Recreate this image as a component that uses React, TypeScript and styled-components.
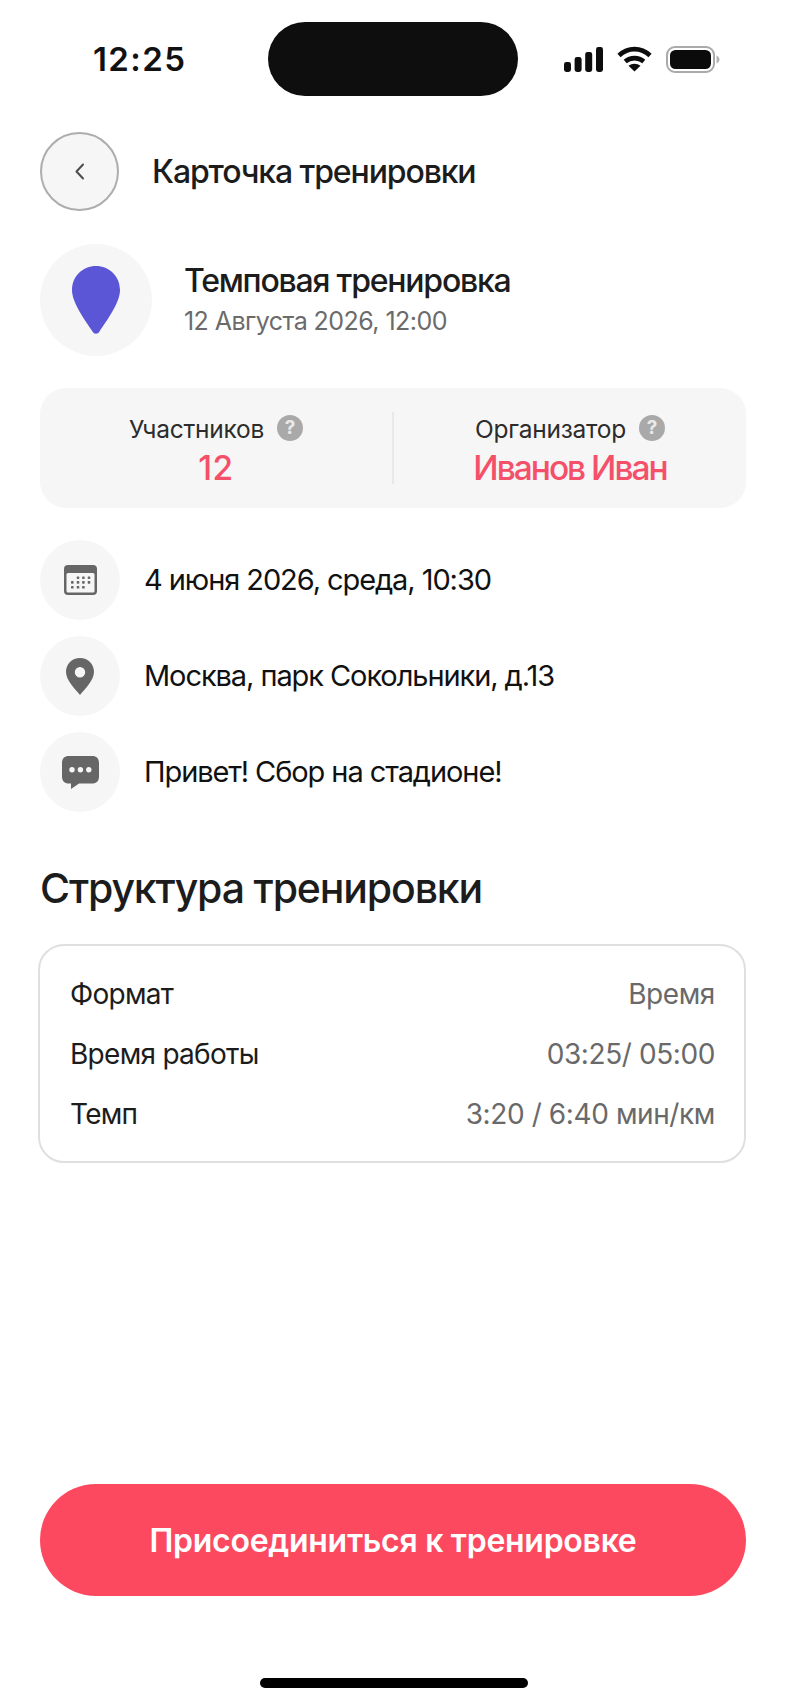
import React from "react";
import styled, { createGlobalStyle } from "styled-components";

const Global = createGlobalStyle`
  html, body { margin: 0; padding: 0; background: #fff; }
  * { box-sizing: border-box; }
  body { font-family: Inter, "Noto Sans", "Liberation Sans", sans-serif; }
`;

const Page = styled.div`
  width: 786px;
  height: 1704px;
  background: #fff;
  display: flex;
  flex-direction: column;
  overflow: hidden;
`;

const StatusBar = styled.div`
  display: grid;
  grid-template-columns: 268px 250px 1fr;
  height: 96px;
  margin-top: 22px;
`;

const Time = styled.div`
  padding-left: 93px;
  font-size: 33px;
  font-weight: 600;
  line-height: 74px;
  letter-spacing: 1.4px;
  color: #111;
`;

const Island = styled.div`
  background: #0e0e0e;
  border-radius: 37px;
  height: 74px;
`;

const StatusIcons = styled.div`
  display: flex;
  align-items: center;
  gap: 14px;
  height: 74px;
  padding-left: 46px;
`;

const Content = styled.div`
  flex: 1;
  display: flex;
  flex-direction: column;
  padding: 14px 40px 0 40px;
`;

const Header = styled.header`
  display: flex;
  align-items: center;
  gap: 33px;
`;

const BackButton = styled.button`
  width: 79px;
  height: 79px;
  padding: 0;
  border-radius: 50%;
  border: 2px solid #adadad;
  background: #f6f6f6;
  display: flex;
  align-items: center;
  justify-content: center;
`;

const HeaderTitle = styled.h1`
  margin: 0;
  font-size: 32px;
  font-weight: 500;
  letter-spacing: -1.12px;
  color: #1c1c1c;
`;

const Workout = styled.section`
  display: flex;
  align-items: center;
  gap: 32px;
  margin-top: 33px;
`;

const WorkoutBadge = styled.div`
  width: 112px;
  height: 112px;
  border-radius: 50%;
  background: #f6f6f6;
  display: flex;
  align-items: center;
  justify-content: center;
`;

const WorkoutText = styled.div`
  display: flex;
  flex-direction: column;
  gap: 5px;
  margin-top: -3px;
`;

const WorkoutName = styled.div`
  font-size: 32px;
  line-height: 40px;
  font-weight: 500;
  letter-spacing: -1.22px;
  color: #1c1c1c;
`;

const WorkoutDate = styled.div`
  font-size: 25px;
  line-height: 30px;
  letter-spacing: -0.55px;
  color: #6b6b6b;
`;

const Stats = styled.section`
  display: grid;
  grid-template-columns: 1fr 2px 1fr;
  align-items: center;
  height: 120px;
  margin-top: 32px;
  background: #f6f6f6;
  border-radius: 26px;
`;

const Divider = styled.div`
  width: 2px;
  height: 72px;
  background: #e8e8e8;
`;

const Stat = styled.div`
  display: flex;
  flex-direction: column;
  align-items: center;
  gap: 4px;
  padding-top: 5px;
`;

const StatLabel = styled.div`
  display: flex;
  align-items: center;
  gap: 13px;
  font-size: 24.5px;
  line-height: 30px;
  letter-spacing: -0.25px;
  color: #2c2c2c;
`;

const Help = styled.span`
  width: 26px;
  height: 26px;
  border-radius: 50%;
  background: #a9a9a9;
  color: #e9e9e9;
  font-size: 19px;
  font-weight: 700;
  line-height: 26px;
  text-align: center;
  margin-top: -2px;
`;

const StatValue = styled.div<{ $tracking: number }>`
  font-size: 33.5px;
  line-height: 40px;
  font-weight: 500;
  letter-spacing: ${(p) => p.$tracking}px;
  color: #f5506a;
`;

const Details = styled.ul`
  list-style: none;
  margin: 32px 0 0;
  padding: 0;
  display: flex;
  flex-direction: column;
  gap: 16px;
`;

const DetailRow = styled.li`
  display: flex;
  align-items: center;
  gap: 24px;
  font-size: 29px;
  line-height: 78px;
  letter-spacing: -1.08px;
  color: #111;
`;

const DetailIcon = styled.div`
  width: 80px;
  height: 80px;
  border-radius: 50%;
  background: #f6f6f6;
  display: flex;
  align-items: center;
  justify-content: center;
`;

const SectionTitle = styled.h2`
  margin: 51px 0 0;
  font-size: 41px;
  line-height: 50px;
  font-weight: 500;
  letter-spacing: -1.15px;
  color: #1c1c1c;
`;

const Table = styled.section`
  width: 708px;
  height: 219px;
  margin: 31px 0 0 -2px;
  padding: 18px 29px 0 30px;
  border: 2px solid #dfdfdf;
  border-radius: 26px;
  display: flex;
  flex-direction: column;
`;

const TableRow = styled.div`
  display: flex;
  justify-content: space-between;
  align-items: center;
  height: 60px;
  font-size: 28px;
  letter-spacing: -0.72px;
  color: #1c1c1c;
`;

const TableValue = styled.span`
  color: #696969;
  letter-spacing: -0.4px;
`;

const JoinButton = styled.button`
  height: 112px;
  margin-top: auto;
  border: 0;
  border-radius: 56px;
  background: #fd495f;
  color: #fff;
  font-family: inherit;
  font-size: 32px;
  font-weight: 600;
  letter-spacing: -0.28px;
`;

const HomeBar = styled.div`
  width: 268px;
  height: 10px;
  border-radius: 5px;
  background: #000;
  margin: 82px 0 16px 260px;
  flex: none;
`;

const Signal = () => (
  <svg width="39" height="25" viewBox="0 0 39 25" fill="#0d0d0d">
    <rect x="0" y="15" width="7" height="10" rx="2.4" />
    <rect x="10.6" y="10" width="7" height="15" rx="2.4" />
    <rect x="21.2" y="5" width="7" height="20" rx="2.4" />
    <rect x="32" y="0" width="7" height="25" rx="2.4" />
  </svg>
);

const Wifi = () => (
  <svg width="35" height="26" viewBox="0 0 35 26" fill="none" stroke="#0d0d0d" strokeWidth="4.6">
    <path d="M2 9.5 C11 1 24 1 33 9.5" />
    <path d="M8.2 15.6 C13.5 11 21.5 11 26.8 15.6" />
    <path d="M17.5 25.5 L11.5 19.8 C15 17 20 17 23.5 19.8 Z" fill="#0d0d0d" stroke="none" />
  </svg>
);

const Battery = () => (
  <svg width="54" height="27" viewBox="0 0 54 27">
    <rect x="1" y="1" width="47" height="25" rx="8" fill="#fff" stroke="#aaa" strokeWidth="2" />
    <rect x="4" y="4" width="41" height="19" rx="5.5" fill="#0b0b0b" />
    <path d="M50.5 9.5 C52.5 10.2 53.5 12 53.5 13.5 C53.5 15 52.5 16.8 50.5 17.5 Z" fill="#b5b5b5" />
  </svg>
);

const Chevron = () => (
  <svg width="11" height="17" viewBox="0 0 11 17" fill="none" stroke="#4d4d4d" strokeWidth="2" strokeLinecap="round" strokeLinejoin="round">
    <path d="M9 1.5 L2.5 8.5 L9 15.5" />
  </svg>
);

const BluePin = () => (
  <svg width="48" height="68" viewBox="0 0 48 68">
    <path d="M24 0 C37 0 48 10 48 24 C48 37 35 54 27.5 65.5 C25.8 68.4 22.2 68.4 20.5 65.5 C13 54 0 37 0 24 C0 10 11 0 24 0 Z" fill="#5a56d6" />
  </svg>
);

const CalendarIcon = () => (
  <svg width="33" height="30" viewBox="0 0 33 30">
    <rect width="33" height="30" rx="4" fill="#666" />
    <rect x="2.5" y="8" width="28" height="19.5" rx="1.5" fill="#f6f6f6" />
    <g fill="#666">
      {[
        [14, 12.7], [19.4, 12.7], [25, 12.7],
        [8.3, 17.4], [14, 17.4], [19.4, 17.4], [25, 17.4],
        [8.3, 22.3], [14, 22.3], [19.4, 22.3],
      ].map(([x, y]) => (
        <rect key={`${x}-${y}`} x={x - 1.3} y={y - 1.3} width="2.6" height="2.6" rx="0.7" />
      ))}
    </g>
  </svg>
);

const GreyPin = () => (
  <svg width="28" height="37" viewBox="0 0 28 37">
    <path fillRule="evenodd" d="M14 0 C22 0 28 6 28 14 C28 22 19 31 14 37 C9 31 0 22 0 14 C0 6 6 0 14 0 Z M14 9 A5.2 5.2 0 1 0 14 19.4 A5.2 5.2 0 1 0 14 9 Z" fill="#666" />
  </svg>
);

const ChatIcon = () => (
  <svg width="37" height="33" viewBox="0 0 37 33">
    <path d="M7 0 H30 C34.5 0 37 2.5 37 7 V20.5 C37 25 34.5 27.5 30 27.5 H17 L9 33 V27.5 H7 C2.5 27.5 0 25 0 20.5 V7 C0 2.5 2.5 0 7 0 Z" fill="#666" />
    <circle cx="10" cy="13.7" r="2.7" fill="#f6f6f6" />
    <circle cx="18.4" cy="13.7" r="2.7" fill="#f6f6f6" />
    <circle cx="26.8" cy="13.7" r="2.7" fill="#f6f6f6" />
  </svg>
);

const details = [
  { icon: <CalendarIcon />, text: "4 июня 2026, среда, 10:30" },
  { icon: <GreyPin />, text: "Москва, парк Сокольники, д.13" },
  { icon: <ChatIcon />, text: "Привет! Сбор на стадионе!" },
];

const rows = [
  ["Формат", "Время"],
  ["Время работы", "03:25/ 05:00"],
  ["Темп", "3:20 / 6:40 мин/км"],
];

export default function App() {
  return (
    <Page>
      <Global />
      <StatusBar>
        <Time>12:25</Time>
        <Island />
        <StatusIcons>
          <Signal />
          <Wifi />
          <Battery />
        </StatusIcons>
      </StatusBar>
      <Content>
        <Header>
          <BackButton aria-label="Назад">
            <Chevron />
          </BackButton>
          <HeaderTitle>Карточка тренировки</HeaderTitle>
        </Header>
        <Workout>
          <WorkoutBadge>
            <BluePin />
          </WorkoutBadge>
          <WorkoutText>
            <WorkoutName>Темповая тренировка</WorkoutName>
            <WorkoutDate>12 Августа 2026, 12:00</WorkoutDate>
          </WorkoutText>
        </Workout>
        <Stats>
          <Stat>
            <StatLabel>
              Участников <Help>?</Help>
            </StatLabel>
            <StatValue $tracking={0.4}>12</StatValue>
          </Stat>
          <Divider />
          <Stat>
            <StatLabel>
              Организатор <Help>?</Help>
            </StatLabel>
            <StatValue $tracking={-2}>Иванов Иван</StatValue>
          </Stat>
        </Stats>
        <Details>
          {details.map((d) => (
            <DetailRow key={d.text}>
              <DetailIcon>{d.icon}</DetailIcon>
              {d.text}
            </DetailRow>
          ))}
        </Details>
        <SectionTitle>Структура тренировки</SectionTitle>
        <Table>
          {rows.map(([k, v]) => (
            <TableRow key={k}>
              <span>{k}</span>
              <TableValue>{v}</TableValue>
            </TableRow>
          ))}
        </Table>
        <JoinButton>Присоединиться к тренировке</JoinButton>
      </Content>
      <HomeBar />
    </Page>
  );
}
